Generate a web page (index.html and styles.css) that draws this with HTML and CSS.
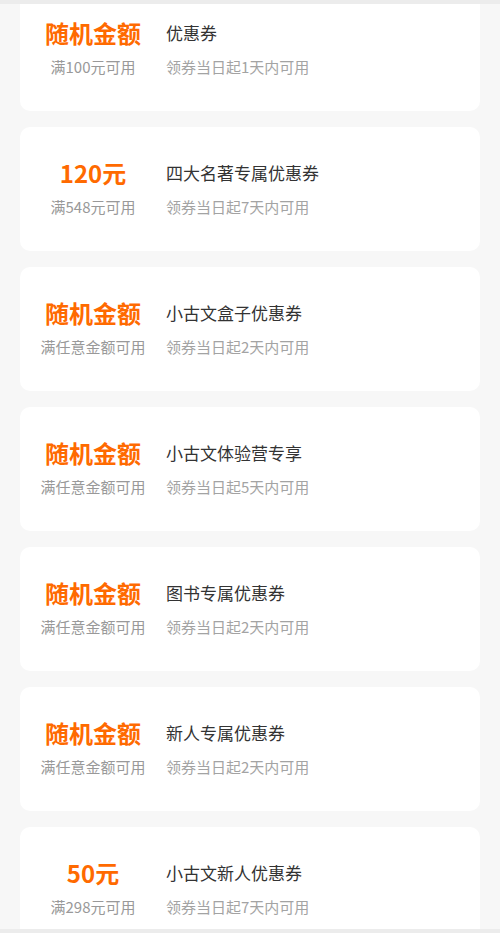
FILE: index.html
```html
<!DOCTYPE html>
<html lang="zh-CN">
<head>
  <meta charset="UTF-8">
  <title>优惠券</title>
  <link rel="stylesheet" href="styles.css">
</head>
<body>
<div class="topbar"></div>

<div class="list">
  <div class="coupon">
    <div class="amount">
      <div class="value">随机金额</div>
      <div class="limit">满100元可用</div>
    </div>
    <div class="info">
      <div class="name">优惠券</div>
      <div class="term">领券当日起1天内可用</div>
    </div>
  </div>

  <div class="coupon">
    <div class="amount">
      <div class="value">120元</div>
      <div class="limit">满548元可用</div>
    </div>
    <div class="info">
      <div class="name">四大名著专属优惠券</div>
      <div class="term">领券当日起7天内可用</div>
    </div>
  </div>

  <div class="coupon">
    <div class="amount">
      <div class="value">随机金额</div>
      <div class="limit">满任意金额可用</div>
    </div>
    <div class="info">
      <div class="name">小古文盒子优惠券</div>
      <div class="term">领券当日起2天内可用</div>
    </div>
  </div>

  <div class="coupon">
    <div class="amount">
      <div class="value">随机金额</div>
      <div class="limit">满任意金额可用</div>
    </div>
    <div class="info">
      <div class="name">小古文体验营专享</div>
      <div class="term">领券当日起5天内可用</div>
    </div>
  </div>

  <div class="coupon">
    <div class="amount">
      <div class="value">随机金额</div>
      <div class="limit">满任意金额可用</div>
    </div>
    <div class="info">
      <div class="name">图书专属优惠券</div>
      <div class="term">领券当日起2天内可用</div>
    </div>
  </div>

  <div class="coupon">
    <div class="amount">
      <div class="value">随机金额</div>
      <div class="limit">满任意金额可用</div>
    </div>
    <div class="info">
      <div class="name">新人专属优惠券</div>
      <div class="term">领券当日起2天内可用</div>
    </div>
  </div>

  <div class="coupon">
    <div class="amount">
      <div class="value">50元</div>
      <div class="limit">满298元可用</div>
    </div>
    <div class="info">
      <div class="name">小古文新人优惠券</div>
      <div class="term">领券当日起7天内可用</div>
    </div>
  </div>
</div>

<div class="bottombar"></div>
</body>
</html>
```

FILE: styles.css
```css
body {
  margin: 0;
  background-color: #f7f7f7;
  font-family: "Noto Sans CJK SC", "Noto Sans", sans-serif;
  overflow: hidden;
}

.topbar {
  position: fixed;
  top: 0;
  left: 0;
  right: 0;
  height: 4px;
  background-color: #ececec;
  z-index: 2;
}

.bottombar {
  position: fixed;
  bottom: 0;
  left: 0;
  right: 0;
  height: 4px;
  background-color: #ececec;
  z-index: 2;
}

.list {
  display: flex;
  flex-direction: column;
  gap: 16px;
  padding: 0 20px;
  margin-top: -13px;
}

.coupon {
  display: flex;
  height: 124px;
  background-color: #fff;
  border-radius: 10px;
}

.amount {
  width: 146px;
  padding-top: 31px;
  text-align: center;
}

.value {
  height: 30px;
  line-height: 30px;
  font-size: 24px;
  font-weight: bold;
  color: #ff6a00;
}

.limit {
  margin-top: 9px;
  line-height: 20px;
  font-size: 15px;
  color: #999;
}

.info {
  padding-top: 31px;
}

.name {
  height: 30px;
  line-height: 30px;
  font-size: 17px;
  color: #333;
}

.term {
  margin-top: 9px;
  line-height: 20px;
  font-size: 15px;
  color: #a3a3a3;
}
```
